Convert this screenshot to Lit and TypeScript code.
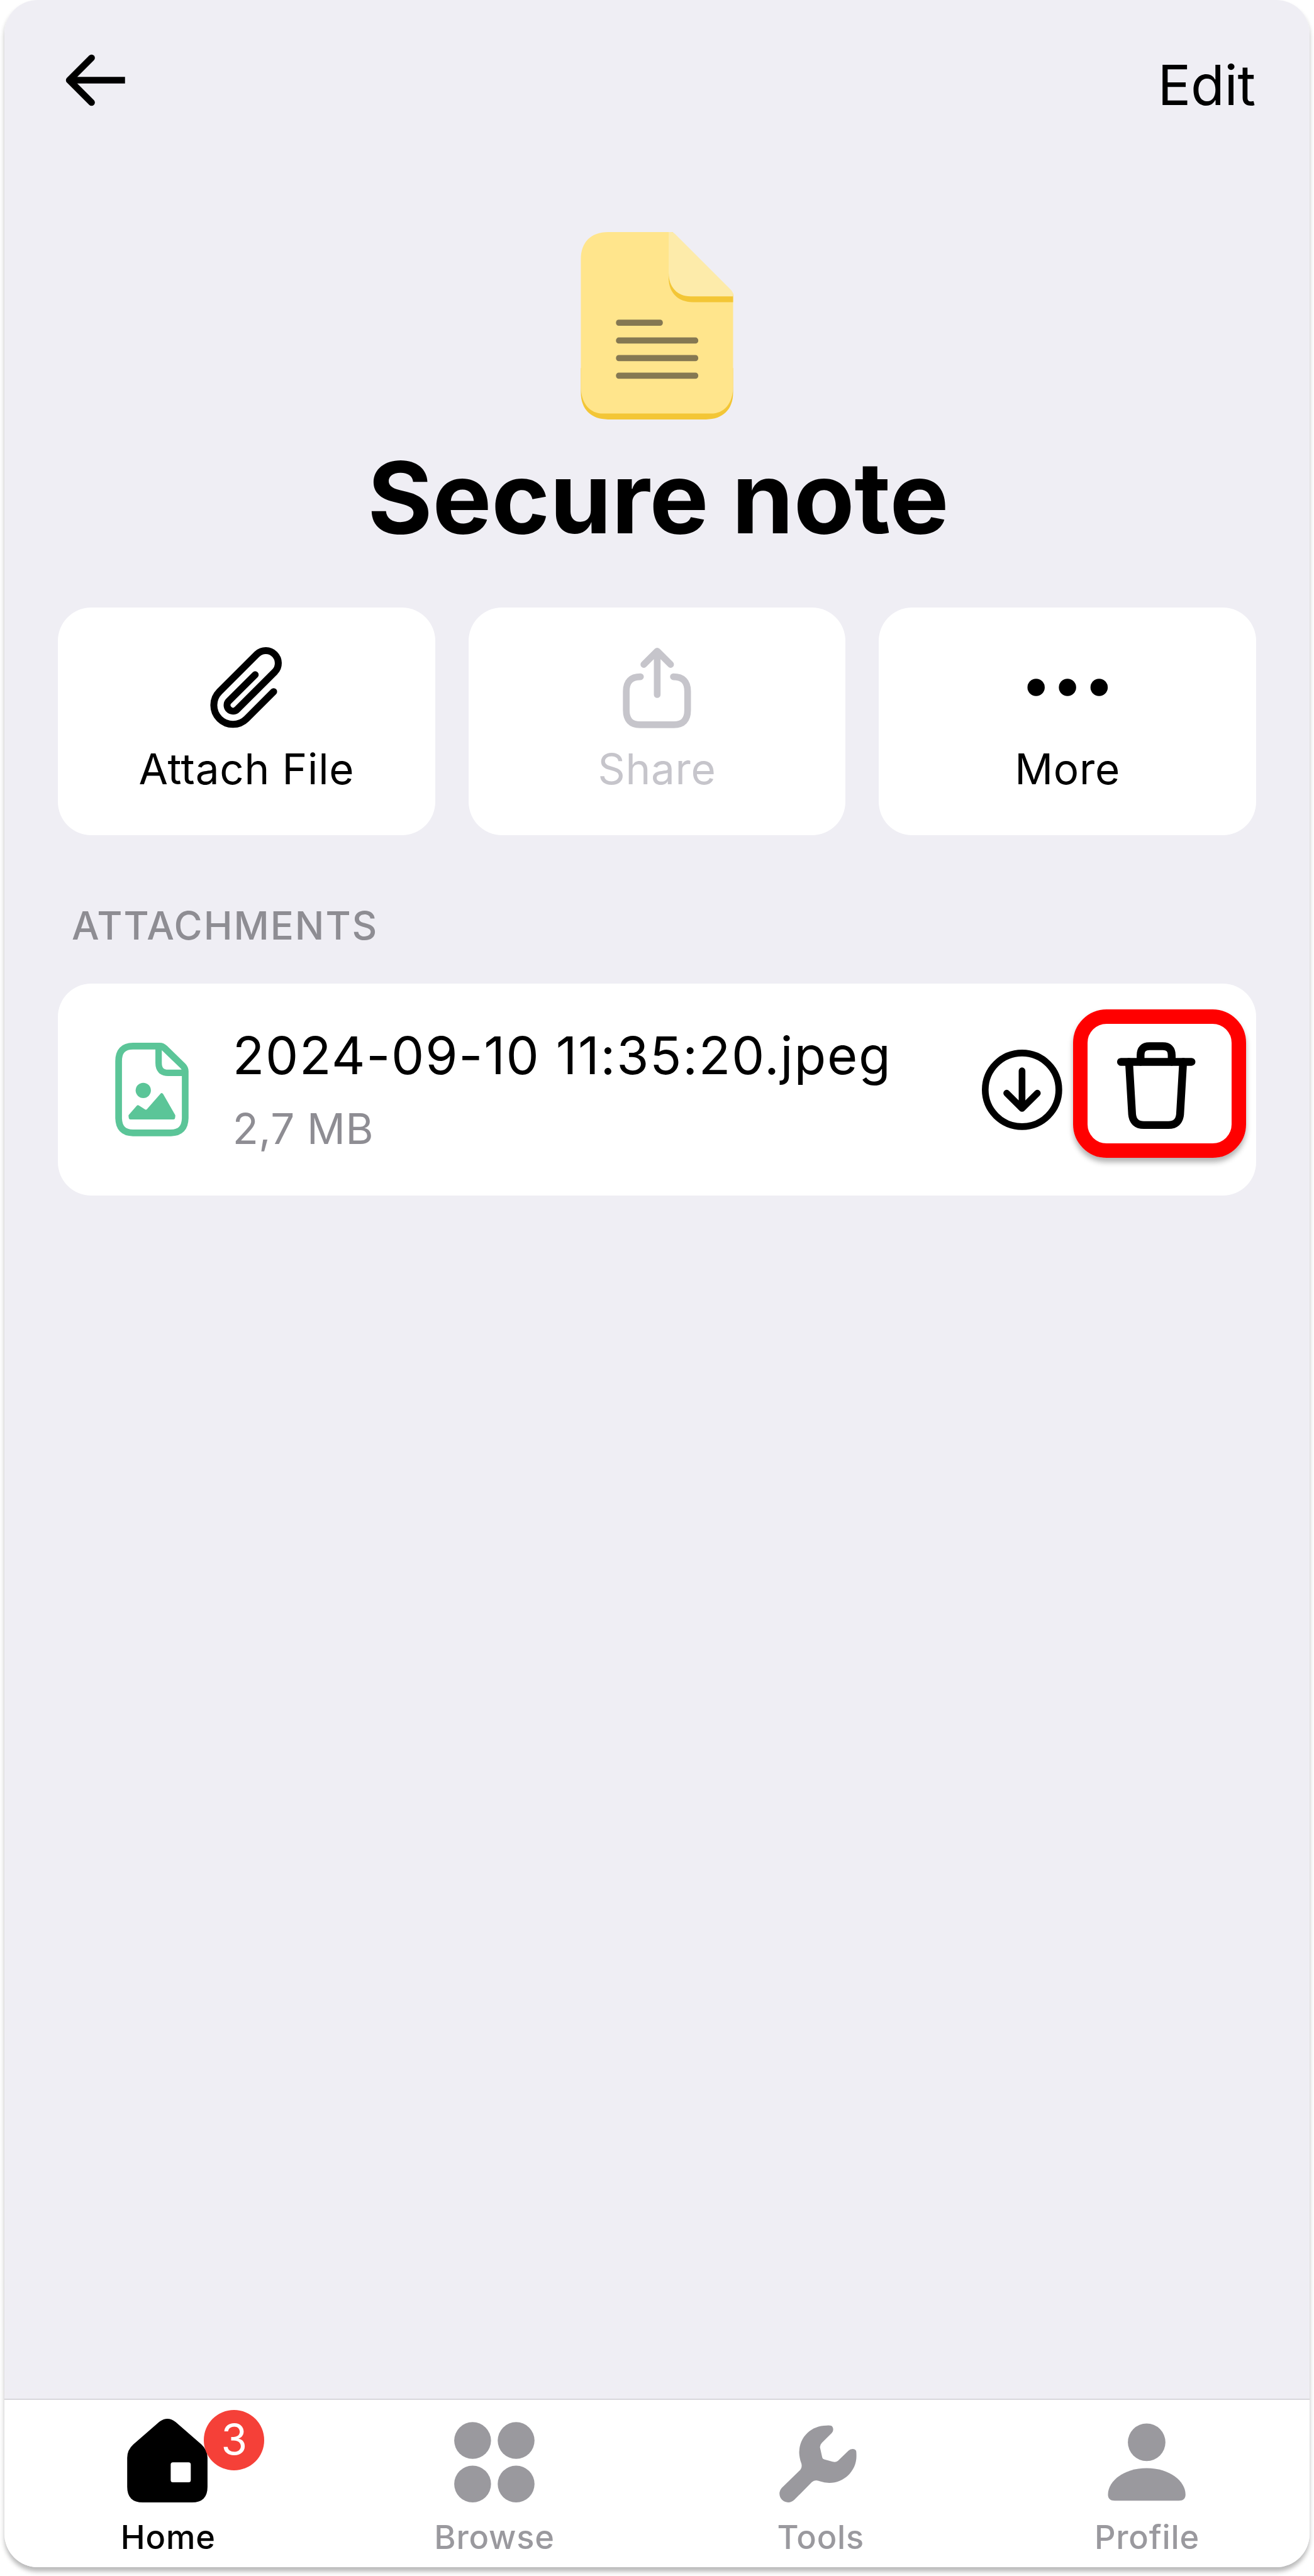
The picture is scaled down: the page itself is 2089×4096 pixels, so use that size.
import { LitElement, html, svg, css, unsafeCSS, type TemplateResult } from "lit";
import { customElement, property } from "lit/decorators.js";

/** The layout is specified on a 2356-unit wide canvas and drawn in a 2089px window. */
const SCALE = 2089 / 2356;
const u = (n: number) => unsafeCSS(`${(n * SCALE).toFixed(3)}px`);

const iconStyles = css`
  .icon {
    display: block;
    flex: none;
    overflow: visible;
  }
`;

const icon = (
  x: number,
  y: number,
  w: number,
  h: number,
  body: TemplateResult,
) => html`<svg
  class="icon"
  viewBox="${x} ${y} ${w} ${h}"
  width=${(w * SCALE).toFixed(3)}
  height=${(h * SCALE).toFixed(3)}
  fill="none"
  aria-hidden="true"
>
  ${body}
</svg>`;

const backIcon = icon(116, 96, 108, 96, svg`
  <g stroke="#000" stroke-width="12" stroke-linejoin="round">
    <path d="M164 104L124 144L164 184" stroke-linecap="round" />
    <path d="M124 144H224" />
  </g>`);

const noteIcon = icon(1041, 416, 274, 336, svg`
  <path fill="#f3c636" d="M1041.5 660H1314.5V704C1314.5 734 1296 752 1266 752H1090C1060 752 1041.5 734 1041.5 704Z" />
  <path fill="#ffe58c" d="M1090 416H1206L1314.5 526V692C1314.5 725 1297 741.500 1275 741.500H1081C1059 741.500 1041.500 725 1041.500 692V464C1041.500 434 1060 416 1090 416Z" />
  <path fill="#f3c636" d="M1199 490L1314.500 528V541.700H1242C1216 541.700 1199 525 1199 499Z" />
  <path fill="#fdebaa" d="M1199 416H1203Q1207 416 1210 419L1311 520Q1314.500 524 1314.500 528V531.400H1238C1214 531.400 1199 514 1199 490Z" />
  <g fill="#857852">
    <rect x="1104.500" y="573" width="84" height="11" rx="5" />
    <rect x="1104.500" y="605" width="147.500" height="11" rx="5" />
    <rect x="1104.500" y="636.500" width="147.500" height="11" rx="5" />
    <rect x="1104.500" y="668" width="147.500" height="11" rx="5" />
  </g>`);

const clipIcon = icon(371, 1162, 142, 144, svg`
  <path stroke="currentColor" stroke-width="12.500" stroke-linecap="round"
    d="M457.500 1210.400L410.200 1257.500A10.600 10.600 0 0 0 425.200 1272.500L492.900 1204.900A22.500 22.500 0 0 0 461.100 1173.100L393.400 1240.700A34.300 34.300 0 0 0 442 1289.300L490.600 1240.700" />`);

const shareIcon = icon(1106, 1162, 144, 144, svg`
  <g stroke="currentColor" stroke-width="12" stroke-linecap="round" stroke-linejoin="round">
    <path d="M1148 1214Q1122.500 1214 1122.500 1240V1274Q1122.500 1300 1147 1300H1208Q1232.500 1300 1232.500 1274V1240Q1232.500 1214 1207 1214" />
    <path d="M1178 1246V1170M1154 1192L1178 1168L1202 1192" />
  </g>`);

const moreIcon = icon(1842, 1162, 144, 144, svg`
  <g fill="currentColor">
    <circle cx="1858" cy="1233" r="15.500" />
    <circle cx="1914.300" cy="1233" r="15.500" />
    <circle cx="1971" cy="1233" r="15.500" />
  </g>`);

const imageFileIcon = icon(206, 1870, 132, 168, svg`
  <g stroke="#5bc598" stroke-width="12" stroke-linejoin="round">
    <path d="M238 1876H286Q291 1876 295 1880L328 1912Q331.700 1916 331.700 1921V2004Q331.700 2031.700 306 2031.700H238Q212.300 2031.700 212.300 2004V1903Q212.300 1876 238 1876Z" />
    <path d="M284 1878V1906Q284 1924 301 1924H331" stroke-width="11.500" />
  </g>
  <circle cx="256.500" cy="1955.500" r="13.700" fill="#5bc598" />
  <path fill="#5bc598" stroke="#5bc598" stroke-width="6" stroke-linejoin="round"
    d="M233.500 2004.700L233 2001L247 1985L258 1992Q261.500 1994.500 264.500 1992L289.500 1963.500L311 2001L310.500 2004.700Z" />`);

const downloadIcon = icon(1760, 1882, 144, 144, svg`
  <g stroke="#000" stroke-width="12" stroke-linecap="round" stroke-linejoin="round">
    <circle cx="1832" cy="1954" r="66" />
    <path d="M1832 1920V1985M1804.500 1960L1832 1987.500L1859.500 1960" />
  </g>`);

const trashIcon = icon(2002, 1864, 142, 180, svg`
  <g stroke="#000" stroke-width="14" stroke-linecap="round">
    <path d="M2010 1904H2136.500" />
    <path d="M2045.200 1904V1892Q2045.200 1875.800 2061 1875.800H2085Q2101 1875.800 2101 1892V1904" />
    <path d="M2024.500 1904L2030 1998Q2032 2017.200 2051 2017.200H2095Q2114 2017.200 2116 1998L2121.500 1904" />
  </g>`);

const homeIcon = icon(225.5, 4338, 150, 150, svg`
  <path fill="currentColor" fill-rule="evenodd"
    d="M285 4344Q300 4332 315 4344L361 4384Q372 4394 372 4408V4460Q372 4488 344 4488H256Q228 4488 228 4460V4408Q228 4394 239 4384ZM310 4416Q306 4416 306 4420V4448Q306 4452 310 4452H338Q342 4452 342 4448V4420Q342 4416 338 4416Z" />`);

const browseIcon = icon(810.5, 4338, 150, 150, svg`
  <g fill="currentColor">
    <circle cx="847" cy="4377" r="33" />
    <circle cx="925" cy="4377" r="33" />
    <circle cx="847" cy="4455" r="33" />
    <circle cx="925" cy="4455" r="33" />
  </g>`);

const toolsIcon = icon(1395.5, 4338, 150, 150, svg`
  <path fill="currentColor" transform="translate(1300 4270) scale(.33333)"
    d="M548 240Q563 239 572 241Q583 247 583 262Q583 272 575 281L522 333Q511 344 512 358L524 412Q526 420 534 422L580 435Q597 439 608 431L665 376Q674 366 687 366Q701 366 706 376Q708 382 708 405C708 485 640 549 562 549Q535 549 513 541Q485 529 468 545L374 640Q360 654 341 654C315 654 294 633 294 607Q294 590 306 576L406 479Q417 467 412 445C404 425 400 400 400 383C402 300 465 240 548 240Z" />`);

const profileIcon = icon(1980.5, 4338, 150, 150, svg`
  <g fill="currentColor" transform="translate(1900 4270) scale(.33333)">
    <circle cx="468" cy="330.500" r="101" />
    <path d="M260 612C260 540 345 470 468 470C592 470 677 540 677 612Q677 645 640 645H297Q260 645 260 612Z" />
  </g>`);

@customElement("action-card")
export class ActionCard extends LitElement {
  @property() label = "";
  @property({ type: Boolean, reflect: true }) disabled = false;
  @property({ attribute: false }) glyph?: TemplateResult;

  static styles = [
    iconStyles,
    css`
      :host {
        display: flex;
        flex-direction: column;
        align-items: center;
        box-sizing: border-box;
        height: ${u(408)};
        padding-top: ${u(72)};
        gap: ${u(24.4)};
        border-radius: ${u(60)};
        background: #fff;
        color: #000;
      }
      :host([disabled]) {
        color: #c6c5cb;
      }
      .label {
        font-size: ${u(76)};
        line-height: ${u(96)};
        letter-spacing: ${u(0.8)};
        white-space: nowrap;
      }
    `,
  ];

  render() {
    return html`${this.glyph}<span class="label">${this.label}</span>`;
  }
}

@customElement("tab-item")
export class TabItem extends LitElement {
  @property() label = "";
  @property({ type: Number }) count = 0;
  @property({ type: Boolean, reflect: true }) active = false;
  @property({ attribute: false }) glyph?: TemplateResult;

  static styles = [
    iconStyles,
    css`
      :host {
        display: flex;
        flex-direction: column;
        align-items: center;
        padding-top: ${u(34)};
        gap: ${u(26.5)};
        color: #9a999e;
      }
      :host([active]) {
        color: #000;
      }
      .glyph {
        position: relative;
      }
      .badge {
        position: absolute;
        left: ${u(140.5)};
        top: ${u(-16)};
        width: ${u(108)};
        height: ${u(108)};
        border-radius: 50%;
        background: #f54038;
        color: #fff;
        font-size: ${u(76)};
        line-height: ${u(107)};
        text-align: center;
      }
      .label {
        padding-left: ${u(2)};
        font-size: ${u(59)};
        font-weight: 500;
        line-height: ${u(72)};
        letter-spacing: ${u(0.9)};
        white-space: nowrap;
      }
    `,
  ];

  render() {
    return html`
      <div class="glyph">
        ${this.glyph}
        ${this.count ? html`<span class="badge">${this.count}</span>` : null}
      </div>
      <span class="label">${this.label}</span>
    `;
  }
}

@customElement("attachment-row")
export class AttachmentRow extends LitElement {
  @property() name = "";
  @property() size = "";

  static styles = [
    iconStyles,
    css`
      :host {
        display: flex;
        align-items: center;
        box-sizing: border-box;
        height: ${u(380)};
        padding: 0 ${u(108)} 0 ${u(102)};
        border-radius: ${u(60)};
        background: #fff;
      }
      .info {
        flex: 1;
        display: flex;
        flex-direction: column;
        gap: ${u(28.4)};
        margin-left: ${u(79)};
        white-space: nowrap;
      }
      .name {
        font-size: ${u(93.5)};
        line-height: ${u(112)};
        letter-spacing: ${u(1.95)};
      }
      .size {
        color: #8e8d93;
        font-size: ${u(76)};
        line-height: ${u(92)};
        letter-spacing: ${u(0.5)};
      }
      .trash {
        position: relative;
        margin-left: ${u(98)};
      }
      .highlight {
        position: absolute;
        left: ${u(-78)};
        top: ${u(-54)};
        box-sizing: border-box;
        width: ${u(310)};
        height: ${u(266)};
        border: ${u(26)} solid #f00;
        border-radius: ${u(60)};
        box-shadow: 0 ${u(7)} ${u(9)} rgba(0, 0, 0, 0.3);
      }
    `,
  ];

  render() {
    return html`
      ${imageFileIcon}
      <div class="info">
        <span class="name">${this.name}</span>
        <span class="size">${this.size}</span>
      </div>
      ${downloadIcon}
      <div class="trash">
        ${trashIcon}
        <div class="highlight"></div>
      </div>
    `;
  }
}

@customElement("app-root")
export class AppRoot extends LitElement {
  static styles = [
    iconStyles,
    css`
      :host {
        display: block;
        box-sizing: border-box;
        width: 2089px;
        height: 4096px;
        padding: 0 ${u(8)} ${u(16)};
        overflow: hidden;
        background: #fff;
        color: #000;
        font-family: Inter, "Liberation Sans", sans-serif;
      }
      .shadow {
        height: 100%;
        border-radius: ${u(60)};
        box-shadow: 0 ${u(7)} ${u(8)} rgba(0, 0, 0, 0.27);
      }
      .screen {
        display: flex;
        flex-direction: column;
        box-sizing: border-box;
        height: 100%;
        overflow: hidden;
        border-radius: ${u(60)};
        background: #efeef4;
      }
      .header {
        display: flex;
        justify-content: space-between;
        align-items: flex-start;
        box-sizing: border-box;
        height: ${u(416)};
        padding: ${u(92)} ${u(97)} 0 ${u(108)};
      }
      .back {
        margin-top: ${u(4)};
      }
      .edit {
        font-size: ${u(99)};
        line-height: ${u(120)};
        letter-spacing: ${u(-0.3)};
      }
      .hero {
        display: flex;
        flex-direction: column;
        align-items: center;
        gap: ${u(31.3)};
        height: ${u(674)};
      }
      .title {
        margin: 0;
        padding-left: ${u(4)};
        font-size: ${u(178)};
        font-weight: 700;
        line-height: ${u(216)};
        letter-spacing: ${u(-0.15)};
        white-space: nowrap;
      }
      .actions {
        display: grid;
        grid-template-columns: repeat(3, 1fr);
        gap: ${u(60)};
        padding: 0 ${u(96)};
      }
      .section {
        margin: ${u(120.7)} ${u(96)} ${u(61.3)} ${u(120.5)};
        font-size: ${u(69.5)};
        font-weight: 500;
        line-height: ${u(84)};
        letter-spacing: ${u(2.2)};
        color: #8e8d93;
      }
      .list {
        padding: 0 ${u(96)};
      }
      .tabs {
        display: grid;
        grid-template-columns: repeat(4, 1fr);
        box-sizing: border-box;
        height: ${u(302)};
        margin-top: auto;
        border-top: 2px solid #d8d7dc;
        background: #fff;
      }
    `,
  ];

  render() {
    return html`
      <div class="shadow">
        <main class="screen">
          <header class="header">
            <div class="back">${backIcon}</div>
            <span class="edit">Edit</span>
          </header>
          <section class="hero">
            ${noteIcon}
            <h1 class="title">Secure note</h1>
          </section>
          <section class="actions">
            <action-card label="Attach File" .glyph=${clipIcon}></action-card>
            <action-card label="Share" disabled .glyph=${shareIcon}></action-card>
            <action-card label="More" .glyph=${moreIcon}></action-card>
          </section>
          <h2 class="section">ATTACHMENTS</h2>
          <section class="list">
            <attachment-row name="2024-09-10 11:35:20.jpeg" size="2,7 MB"></attachment-row>
          </section>
          <nav class="tabs">
            <tab-item label="Home" active .count=${3} .glyph=${homeIcon}></tab-item>
            <tab-item label="Browse" .glyph=${browseIcon}></tab-item>
            <tab-item label="Tools" .glyph=${toolsIcon}></tab-item>
            <tab-item label="Profile" .glyph=${profileIcon}></tab-item>
          </nav>
        </main>
      </div>
    `;
  }
}
